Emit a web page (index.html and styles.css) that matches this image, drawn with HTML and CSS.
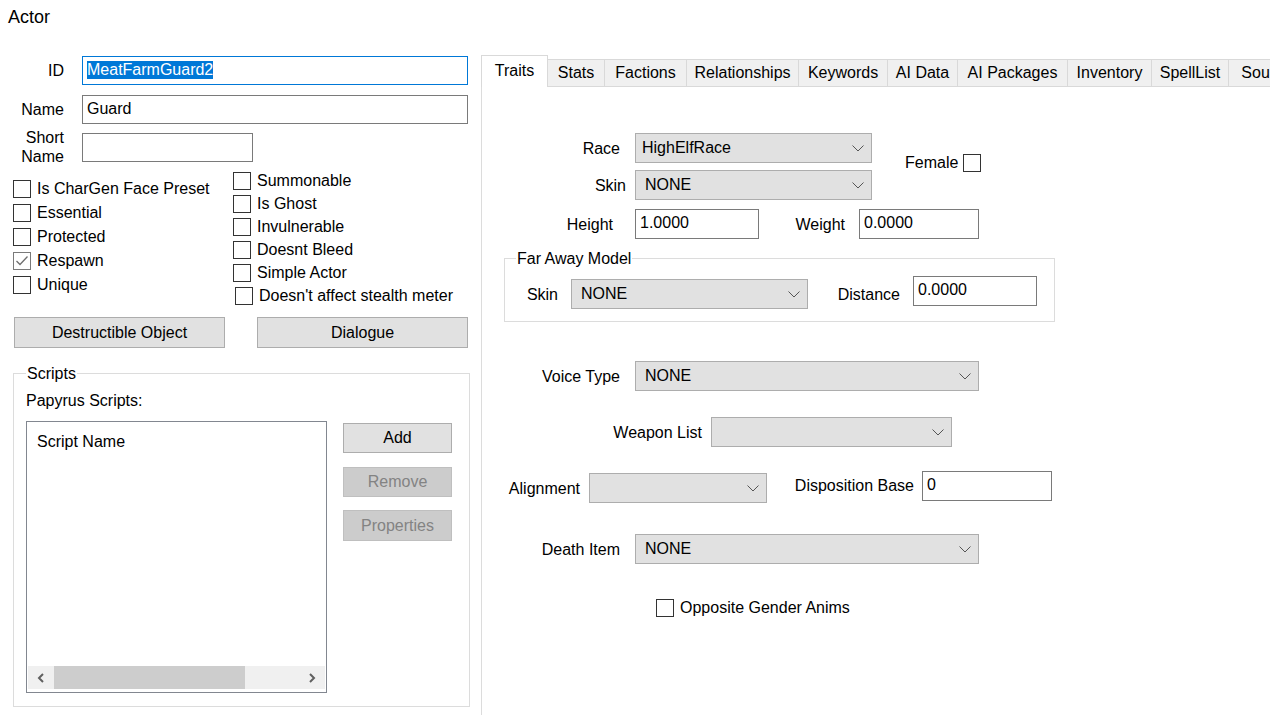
FILE: index.html
```html
<!DOCTYPE html>
<html lang="en">
<head>
    <meta charset="UTF-8">
    <title>Actor</title>
    <link rel="stylesheet" href="styles.css">
</head>
<body>
    <div class="title">Actor</div>

    <div class="main">
        <!-- Left column: identity, flags, scripts -->
        <div class="left">
            <div class="field-row">
                <div class="field-label">ID</div>
                <div class="textbox focused wide"><span class="sel">MeatFarmGuard2</span></div>
            </div>
            <div class="field-row row-name">
                <div class="field-label">Name</div>
                <div class="textbox wide">Guard</div>
            </div>
            <div class="field-row row-short">
                <div class="field-label">Short<br>Name</div>
                <div class="textbox short"></div>
            </div>

            <div class="checks">
                <div class="check-col check-col-left">
                    <div class="check"><span class="box"></span>Is CharGen Face Preset</div>
                    <div class="check"><span class="box"></span>Essential</div>
                    <div class="check"><span class="box"></span>Protected</div>
                    <div class="check"><span class="box checked"><svg width="16" height="16" viewBox="0 0 16 16"><path d="M2.5 8 L6 11.5 L13.5 3.5" fill="none" stroke="#6f6f6f" stroke-width="1.3"/></svg></span>Respawn</div>
                    <div class="check"><span class="box"></span>Unique</div>
                </div>
                <div class="check-col check-col-right">
                    <div class="check"><span class="box"></span>Summonable</div>
                    <div class="check"><span class="box"></span>Is Ghost</div>
                    <div class="check"><span class="box"></span>Invulnerable</div>
                    <div class="check"><span class="box"></span>Doesnt Bleed</div>
                    <div class="check"><span class="box"></span>Simple Actor</div>
                    <div class="check nudge"><span class="box"></span>Doesn't affect stealth meter</div>
                </div>
            </div>

            <div class="button-row">
                <div class="btn btn-wide">Destructible Object</div>
                <div class="btn btn-wide">Dialogue</div>
            </div>

            <fieldset class="group scripts">
                <legend>Scripts</legend>
                <div class="papyrus">Papyrus Scripts:</div>
                <div class="scripts-body">
                    <div class="listbox">
                        <div class="list-head">Script Name</div>
                        <div class="hscroll">
                            <div class="arrow"><svg width="8" height="10" viewBox="0 0 8 10"><path d="M6 1 L2 5 L6 9" fill="none" stroke="#606060" stroke-width="2"/></svg></div>
                            <div class="thumb"></div>
                            <div class="track"></div>
                            <div class="arrow"><svg width="8" height="10" viewBox="0 0 8 10"><path d="M2 1 L6 5 L2 9" fill="none" stroke="#606060" stroke-width="2"/></svg></div>
                        </div>
                    </div>
                    <div class="script-buttons">
                        <div class="btn btn-add">Add</div>
                        <div class="btn disabled btn-remove">Remove</div>
                        <div class="btn disabled btn-props">Properties</div>
                    </div>
                </div>
            </fieldset>
        </div>

        <!-- Right column: tabbed pages -->
        <div class="tabs-area">
            <div class="tabs">
                <div class="tab active">Traits</div>
                <div class="tab">Stats</div>
                <div class="tab">Factions</div>
                <div class="tab">Relationships</div>
                <div class="tab">Keywords</div>
                <div class="tab">AI Data</div>
                <div class="tab">AI Packages</div>
                <div class="tab">Inventory</div>
                <div class="tab">SpellList</div>
                <div class="tab">Sounds</div>
            </div>

            <div class="tab-page">
                <div class="race-block">
                    <div class="race-col">
                        <div class="form-row">
                            <div class="lbl lbl-race">Race</div>
                            <div class="combo combo-race"><span>HighElfRace</span><svg class="chev" width="12" height="7" viewBox="0 0 12 7"><path d="M0.5 0.5 L6 6 L11.5 0.5" fill="none" stroke="#555" stroke-width="1"/></svg></div>
                        </div>
                        <div class="form-row row-skin">
                            <div class="lbl lbl-skin">Skin</div>
                            <div class="combo combo-race"><span class="none">NONE</span><svg class="chev" width="12" height="7" viewBox="0 0 12 7"><path d="M0.5 0.5 L6 6 L11.5 0.5" fill="none" stroke="#555" stroke-width="1"/></svg></div>
                        </div>
                    </div>
                    <div class="female">Female<span class="box"></span></div>
                </div>

                <div class="form-row row-height">
                    <div class="lbl lbl-height">Height</div>
                    <div class="textbox num">1.0000</div>
                    <div class="lbl lbl-weight">Weight</div>
                    <div class="textbox num-weight">0.0000</div>
                </div>

                <fieldset class="group faraway">
                    <legend>Far Away Model</legend>
                    <div class="form-row far-row">
                        <div class="lbl lbl-farskin">Skin</div>
                        <div class="combo combo-far"><span class="none">NONE</span><svg class="chev" width="12" height="7" viewBox="0 0 12 7"><path d="M0.5 0.5 L6 6 L11.5 0.5" fill="none" stroke="#555" stroke-width="1"/></svg></div>
                        <div class="lbl lbl-distance">Distance</div>
                        <div class="textbox num raised">0.0000</div>
                    </div>
                </fieldset>

                <div class="form-row row-voice">
                    <div class="lbl lbl-race">Voice Type</div>
                    <div class="combo combo-long"><span class="none">NONE</span><svg class="chev" width="12" height="7" viewBox="0 0 12 7"><path d="M0.5 0.5 L6 6 L11.5 0.5" fill="none" stroke="#555" stroke-width="1"/></svg></div>
                </div>

                <div class="form-row row-weapon">
                    <div class="lbl lbl-weapon">Weapon List</div>
                    <div class="combo combo-weapon"><span></span><svg class="chev" width="12" height="7" viewBox="0 0 12 7"><path d="M0.5 0.5 L6 6 L11.5 0.5" fill="none" stroke="#555" stroke-width="1"/></svg></div>
                </div>

                <div class="form-row row-align">
                    <div class="lbl lbl-align">Alignment</div>
                    <div class="combo combo-align"><span></span><svg class="chev" width="12" height="7" viewBox="0 0 12 7"><path d="M0.5 0.5 L6 6 L11.5 0.5" fill="none" stroke="#555" stroke-width="1"/></svg></div>
                    <div class="lbl lbl-disp">Disposition Base</div>
                    <div class="textbox disp raised">0</div>
                </div>

                <div class="form-row row-death">
                    <div class="lbl lbl-race">Death Item</div>
                    <div class="combo combo-long"><span class="none">NONE</span><svg class="chev" width="12" height="7" viewBox="0 0 12 7"><path d="M0.5 0.5 L6 6 L11.5 0.5" fill="none" stroke="#555" stroke-width="1"/></svg></div>
                </div>

                <div class="check opposite"><span class="box"></span>Opposite Gender Anims</div>
            </div>
        </div>
    </div>
</body>
</html>
```

FILE: styles.css
```css
* { margin: 0; padding: 0; box-sizing: border-box; }
body {
    font-family: "Liberation Sans", Arial, sans-serif;
    font-size: 16px;
    color: #000;
    background: #fff;
    width: 1270px;
    height: 715px;
    overflow: hidden;
}
.title { height: 55px; padding: 6px 8px; font-size: 18px; line-height: 22px; }
.main { display: flex; }

/* left column */
.left { width: 481px; flex: none; padding-top: 1px; }
.field-row { display: flex; align-items: center; }
.field-label { width: 64px; margin-right: 18px; text-align: right; line-height: 19px; }
.row-name { margin-top: 10px; }
.row-short { margin-top: 4px; }

.textbox {
    height: 29px;
    border: 1px solid #7a7a7a;
    background: #fff;
    padding: 0 0 2px 4px;
    display: flex;
    align-items: center;
    white-space: nowrap;
    overflow: hidden;
}
.textbox.focused { border-color: #0078d7; }
.textbox.wide { width: 386px; }
.textbox.short { width: 171px; }
.sel { background: #0078d7; color: #fff; }

.checks { display: flex; margin-top: 3px; }
.check-col-left { width: 233px; padding: 8px 0 0 13px; }
.check { display: flex; align-items: center; height: 24px; white-space: nowrap; }
.check-col-right .check { height: 23px; }
.check.nudge { padding-left: 2px; }
.box {
    width: 18px;
    height: 18px;
    border: 1px solid #333;
    background: #fff;
    margin-right: 6px;
    flex: none;
    display: flex;
}
.box.checked { border-color: #7a7a7a; }

.button-row { display: flex; gap: 32px; padding-left: 14px; margin-top: 10px; }
.btn {
    height: 31px;
    border: 1px solid #adadad;
    background: #e1e1e1;
    display: flex;
    align-items: center;
    justify-content: center;
}
.btn.disabled { background: #cccccc; border-color: #bfbfbf; color: #838383; }
.btn-wide { width: 211px; }

.group { border: 1px solid #dcdcdc; }
.group legend { padding: 0 1px; line-height: 19px; }
.scripts { margin: 16px 0 0 13px; width: 457px; padding: 0 12px 13px; }
.papyrus { margin-top: 8px; line-height: 19px; }
.scripts-body { display: flex; margin-top: 11px; }

.listbox {
    width: 301px;
    height: 272px;
    border: 1px solid #828790;
    display: flex;
    flex-direction: column;
}
.list-head { flex: 1; padding: 10px 0 0 10px; line-height: 19px; }
.hscroll { height: 23px; margin: 0 1px 3px 1px; background: #f0f0f0; display: flex; }
.hscroll .arrow { width: 26px; display: flex; align-items: center; justify-content: center; }
.hscroll .thumb { width: 191px; background: #cdcdcd; }
.hscroll .track { flex: 1; }

.script-buttons { width: 109px; margin-left: 16px; padding-top: 2px; display: flex; flex-direction: column; }
.btn-add { height: 30px; }
.btn-remove { height: 30px; margin-top: 14px; }
.btn-props { margin-top: 13px; }

/* tabs */
.tabs-area { flex: 1; min-width: 0; }
.tabs {
    display: grid;
    grid-template-columns: 67px 57px 82px 112px 89px 70px 110px 84px 77px 80px;
    align-items: end;
    height: 32px;
    overflow: hidden;
    white-space: nowrap;
}
.tab {
    height: 28px;
    background: #f0f0f0;
    border: 1px solid #d9d9d9;
    border-left: none;
    text-align: center;
    line-height: 26px;
}
.tab.active {
    height: 32px;
    background: #fff;
    border-left: 1px solid #d9d9d9;
    border-bottom: none;
    padding-top: 5px;
    line-height: 19px;
}
.tab-page { display: flow-root; height: 628px; border-left: 1px solid #dcdcdc; }

.form-row { display: flex; align-items: center; }
.lbl { text-align: right; line-height: 19px; white-space: nowrap; flex: none; }
.combo {
    height: 30px;
    border: 1px solid #adadad;
    background: #e1e1e1;
    display: flex;
    align-items: center;
    justify-content: space-between;
    padding: 0 7px 0 6px;
    flex: none;
}
.combo .none { padding-left: 3px; }
.chev { flex: none; margin-top: 1px; }

.race-block { display: flex; margin-top: 46px; }
.row-skin { margin-top: 7px; }
.lbl-race { width: 138px; margin-right: 15px; }
.lbl-skin { width: 144px; margin-right: 9px; }
.combo-race { width: 237px; }
.female { display: flex; align-items: center; margin: 20px 0 0 33px; height: 19px; }
.female .box { margin: 0 0 0 5px; }

.row-height { margin-top: 9px; }
.lbl-height { width: 131px; margin-right: 22px; }
.textbox.num { width: 124px; height: 30px; }
.lbl-weight { width: 86px; margin-right: 14px; }
.textbox.num-weight { width: 120px; height: 30px; }

.faraway { margin: 10px 0 0 22px; width: 551px; padding: 0 11px 12px; }
.far-row { margin-top: 11px; align-items: flex-start; height: 30px; }
.far-row .lbl { margin-top: 6px; }
.lbl-farskin { width: 42px; margin-right: 13px; }
.combo-far { width: 237px; }
.lbl-distance { width: 92px; margin-right: 13px; }
.raised { margin-top: -3px; }

.row-voice { margin-top: 39px; }
.combo-long { width: 344px; }
.row-weapon { margin-top: 26px; }
.lbl-weapon { width: 220px; margin-right: 9px; }
.combo-weapon { width: 241px; }

.row-align { margin-top: 26px; align-items: flex-start; height: 30px; }
.row-align .lbl { margin-top: 6px; }
.lbl-align { width: 98px; margin-right: 9px; }
.combo-align { width: 178px; }
.lbl-disp { width: 147px; margin-right: 8px; margin-top: 3px !important; }
.textbox.disp { width: 130px; height: 30px; margin-top: -2px; }

.row-death { margin-top: 31px; }
.opposite { margin: 34px 0 0 174px; height: 19px; }
```
